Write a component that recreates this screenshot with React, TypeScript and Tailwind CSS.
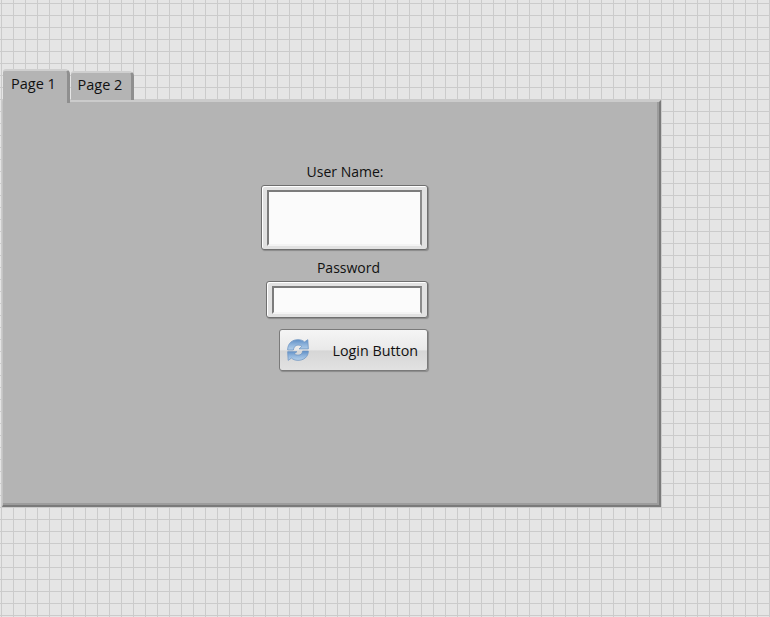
import React from "react";

const RefreshIcon = () => (
  <svg width="24" height="24" viewBox="0 0 22 22">
    <defs>
      <linearGradient id="blueFill" x1="0" y1="0" x2="0" y2="1">
        <stop offset="0" stopColor="#5f8fc6" />
        <stop offset="0.5" stopColor="#8fb4dc" />
        <stop offset="1" stopColor="#b5d0ea" />
      </linearGradient>
    </defs>
    <path
      d="M1.5 11 C1.5 4.5 6 1.5 11 1.5 C13.8 1.5 15.6 2.4 17 3.6 L20 1.5 L20.5 10 L12 10 L14.5 7.6 C13.6 6.9 12.4 6.5 11 6.5 C8.5 6.5 7 8.5 6.8 11 Z"
      fill="url(#blueFill)"
      stroke="#6d94c2"
      strokeWidth="0.7"
    />
    <path
      d="M20.5 12 C20.5 17.5 16 20.5 11 20.5 C8.2 20.5 6.4 19.6 5 18.4 L2 20.5 L1.5 12.5 L10 12.5 L7.5 14.6 C8.4 15.3 9.6 15.7 11 15.7 C13.5 15.7 15 14.5 15.2 12 Z"
      fill="url(#blueFill)"
      stroke="#6d94c2"
      strokeWidth="0.7"
    />
  </svg>
);

const TextBox = ({ className }: { className: string }) => (
  <div className={`${className} rounded-[3px] border border-[#6f6f6f] bg-[#e2e2e2] px-[5px] pb-[3px] pt-[4px] shadow-[1px_1px_1px_#8a8a8a,inset_1px_1px_0_#fff]`}>
    <div className="h-full w-full border-2 border-[#7c7c7c] border-b-[#f4f4f4] border-r-[#8c8c8c] bg-[#fbfbfb]" />
  </div>
);

const App = () => {
  return (
    <div className="h-[617px] w-[770px] overflow-hidden bg-[#e5e5e5] bg-[linear-gradient(to_right,#cbcbcb_1px,transparent_1px),linear-gradient(to_bottom,#cbcbcb_1px,transparent_1px)] bg-size-[12px_12px] bg-position-[1px_3px] pl-[2px] pt-[69px] font-['Open_Sans','Noto_Sans',sans-serif] text-[14px] text-[#111111]">
      <div className="flex h-[31px] items-start">
        <div className="relative z-10 ml-[1px] flex h-[34px] w-[67px] items-center justify-center rounded-tl-[3px] rounded-tr-[5px] border-r-[3px] border-t-2 border-r-[#8f8f8f] border-t-[#cfcfcf] bg-[#b4b4b4] pb-[6px] pr-[3px] text-[14.5px]">
          Page 1
        </div>
        <div className="ml-[1px] mt-[2px] flex h-[29px] w-[63px] items-center justify-center rounded-tl-[3px] rounded-tr-[5px] border-r-[3px] border-t-2 border-r-[#8f8f8f] border-t-[#cfcfcf] bg-[#b4b4b4] pb-[3px] pr-[2px] text-[14.5px]">
          Page 2
        </div>
      </div>
      <div className="flex h-[407px] w-[659px] justify-start border-b-2 border-l border-r-2 border-t-[2px] border-b-[#7a7a7a] border-l-[#c4c4c4] border-r-[#7a7a7a] border-t-[#cbcbcb] bg-[#b4b4b4] pl-[258px] pt-[60px] shadow-[inset_-2px_-2px_0_#9c9c9c]">
        <div className="flex w-[167px] flex-col items-end">
          <div className="h-[21px] w-full pl-[1px] text-center leading-[20px]">User Name:</div>
          <TextBox className="mt-[2px] h-[65px] w-[167px]" />
          <div className="mt-[8px] h-[21px] w-[162px] pl-[3px] text-center leading-[20px]">Password</div>
          <TextBox className="mt-[2px] h-[37px] w-[162px]" />
          <button className="mt-[11px] flex h-[42px] w-[149px] items-center justify-between rounded-[3px] border border-[#7a7a7a] bg-[linear-gradient(to_bottom,#f5f5f5_0%,#e9e9e9_50%,#d6d6d6_52%,#e2e2e2_100%)] pl-[6px] pr-[9px] shadow-[1px_1px_1px_#8a8a8a]">
            <RefreshIcon />
            <span className="pt-[1px] text-[14.3px]">Login Button</span>
          </button>
        </div>
      </div>
    </div>
  );
};

export default App;
